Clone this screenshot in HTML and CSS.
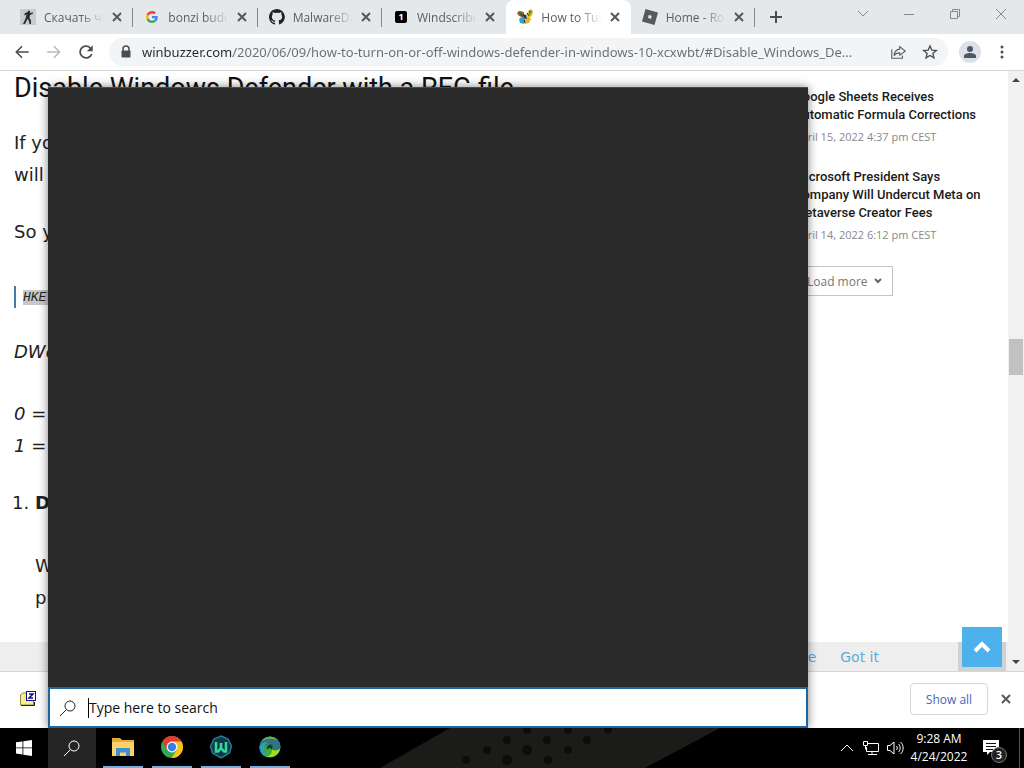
FILE: index.html
```html
<!DOCTYPE html>
<html lang="en">
<head>

    <meta charset="utf-8">
    <meta name="viewport" content="width=device-width, initial-scale=1.0">

    <title>Windows search</title>

    <link rel="stylesheet" href="styles.css">

</head>

<body>

<div class="desktop">

    <div class="tab-strip">

        <div class="tabs">

            <div class="tab">
                <svg class="favicon" viewBox="0 0 16 16"><rect width="16" height="16" fill="#c9cbcc"/><path d="M8.500 1.500l1.500.5v2l3-.5v1l-3 1.500-.5 3 1.500 2.500v3.500H9.500L9 12 7.500 10 5 15H3l2.500-5.500 1-4-2 1v-2l3-1.500z" fill="#2b2b2b"/></svg>
                <a class="tab-title" href="#">Скачать читы</a>
                <button class="tab-close" title="Close tab"><svg viewBox="0 0 10 10"><path d="M1 1l8 8M9 1l-8 8"/></svg></button>
            </div>

            <div class="tab">
                <svg class="favicon favicon-google" viewBox="0 0 48 48"><path fill="#ea4335" d="M24 9.500c3.500 0 6.700 1.200 9.200 3.600l6.900-6.900C35.900 2.400 30.500 0 24 0 14.600 0 6.500 5.400 2.600 13.200l8 6.200C12.400 13.700 17.700 9.500 24 9.500z"/><path fill="#4285f4" d="M47 24.500c0-1.600-.2-3.100-.4-4.500H24v9h12.900c-.6 3-2.300 5.500-4.800 7.200l7.700 6C44.400 38 47 31.800 47 24.500z"/><path fill="#fbbc05" d="M10.500 28.600a14 14 0 0 1 0-9.200l-8-6.200a24 24 0 0 0 0 21.600z"/><path fill="#34a853" d="M24 48c6.500 0 11.900-2.100 15.900-5.800l-7.700-6c-2.200 1.500-5 2.300-8.200 2.300-6.300 0-11.600-4.200-13.500-9.900l-8 6.200C6.500 42.600 14.600 48 24 48z"/></svg>
                <a class="tab-title" href="#">bonzi buddy</a>
                <button class="tab-close" title="Close tab"><svg viewBox="0 0 10 10"><path d="M1 1l8 8M9 1l-8 8"/></svg></button>
            </div>

            <div class="tab">
                <svg class="favicon" viewBox="0 0 16 16"><path fill="#202327" d="M8 0C3.600 0 0 3.600 0 8c0 3.500 2.300 6.500 5.500 7.600.4.100.5-.2.500-.4v-1.500c-2.200.5-2.700-.9-2.700-.9-.4-.9-.9-1.200-.9-1.200-.7-.5.100-.5.100-.5.800.1 1.200.8 1.200.8.700 1.200 1.900.9 2.300.7.100-.5.300-.9.500-1.100-1.800-.2-3.600-.9-3.600-4 0-.9.300-1.600.8-2.100-.1-.2-.4-1 .1-2.100 0 0 .7-.2 2.200.8a7.600 7.600 0 0 1 4 0c1.500-1 2.200-.8 2.200-.8.400 1.100.2 1.900.1 2.100.5.600.8 1.300.8 2.100 0 3.100-1.900 3.700-3.700 3.900.3.300.6.800.6 1.500v2.200c0 .2.100.5.600.4A8 8 0 0 0 8 0z"/></svg>
                <a class="tab-title" href="#">MalwareDatabase</a>
                <button class="tab-close" title="Close tab"><svg viewBox="0 0 10 10"><path d="M1 1l8 8M9 1l-8 8"/></svg></button>
            </div>

            <div class="tab">
                <span class="favicon favicon-one">1</span>
                <a class="tab-title" href="#">Windscribe VPN</a>
                <button class="tab-close" title="Close tab"><svg viewBox="0 0 10 10"><path d="M1 1l8 8M9 1l-8 8"/></svg></button>
            </div>

            <div class="tab tab-active">
                <svg class="favicon" viewBox="0 0 16 16"><path d="M0 4l3-2 4 1v4l-3 1-3-2z" fill="#c9502a"/><path d="M1 2l3 1 2 3-3 1z" fill="#2d7a3c"/><path d="M9 6l2-4 3-2 2 2-1 5-4 2z" fill="#e8c326"/><path d="M12 1l3 1-1 3-2 1z" fill="#4f9440"/><path d="M2 10l4-3 3 3-2 5-4-1z" fill="#3f9fca"/><path d="M8 10l4-3 2 3-2 4-4 1z" fill="#eeb41f"/><path d="M6 5l3 1 1 4-3-1z" fill="#22303a"/><path d="M10 4l2 3M7 11l1 3M4 5l2 3" stroke="#3b2a1a" fill="none"/></svg>
                <a class="tab-title" href="#">How to Turn On</a>
                <button class="tab-close" title="Close tab"><svg viewBox="0 0 10 10"><path d="M1 1l8 8M9 1l-8 8"/></svg></button>
            </div>

            <div class="tab">
                <svg class="favicon" viewBox="0 0 16 16"><path fill="#58595b" fill-rule="evenodd" d="M3.500 0L16 3.400 12.500 16 0 12.500zM6.700 6l-.7 3 3 .8.800-3z"/></svg>
                <a class="tab-title" href="#">Home - Roblox</a>
                <button class="tab-close" title="Close tab"><svg viewBox="0 0 10 10"><path d="M1 1l8 8M9 1l-8 8"/></svg></button>
            </div>

        </div>

        <button class="new-tab" title="New tab"><svg viewBox="0 0 12 12"><path d="M6 0v12M0 6h12"/></svg></button>

        <div class="window-controls">
            <button title="Search tabs"><svg viewBox="0 0 12 12"><path d="M1 3l5 5 5-5"/></svg></button>
            <button title="Minimize"><svg viewBox="0 0 12 12"><path d="M1 6.500h10"/></svg></button>
            <button title="Restore"><svg viewBox="0 0 12 12"><path d="M1.500 3.500h7v7h-7zM3.500 3.500v-2h7v7h-2"/></svg></button>
            <button title="Close"><svg viewBox="0 0 12 12"><path d="M1 1l10 10M11 1L1 11"/></svg></button>
        </div>

    </div>

    <div class="toolbar">

        <button class="icon-button" title="Back"><svg viewBox="0 0 24 24"><path fill="#4a4d51" d="M21 11H6.800l6-6-1.500-1.400L3 12l8.300 8.400 1.500-1.400-6-6H21z"/></svg></button>
        <button class="icon-button" title="Forward"><svg viewBox="0 0 24 24"><path fill="#b9bbbd" d="M3 11h14.200l-6-6 1.500-1.400L21 12l-8.300 8.400-1.500-1.400 6-6H3z"/></svg></button>
        <button class="icon-button" title="Reload"><svg viewBox="0 0 24 24"><path fill="#4a4d51" d="M18.400 5.600A9 9 0 1 0 20.700 14.500h-2.400A6.700 6.700 0 1 1 16.800 7.200L13 11h8V3z"/></svg></button>

        <div class="address-bar">
            <svg class="lock" viewBox="0 0 12 14"><path d="M3 6V4a3 3 0 0 1 6 0v2" fill="none" stroke="#4a4d51" stroke-width="1.500"/><rect x="1.500" y="5.500" width="9" height="7" rx="1" fill="#4a4d51"/></svg>
            <input class="address-input" type="text" aria-label="Address" value="winbuzzer.com/2020/06/09/how-to-turn-on-or-off-windows-defender-in-windows-10-xcxwbt/#Disable_Windows_De...">
            <button class="icon-button" title="Share"><svg viewBox="0 0 18 18" fill="none" stroke="#5b5e62" stroke-width="1.300"><path d="M2 6v10h12v-3M11 3l6 5-6 4.500V10c-3 0-5 .8-6.500 3C5 9 7 6 11 5.700z"/></svg></button>
            <button class="icon-button" title="Bookmark"><svg viewBox="0 0 24 24" fill="none" stroke="#4a4d51" stroke-width="2"><path d="M12 3l2.700 6.200 6.800.6-5.200 4.400 1.600 6.600-5.900-3.500-5.900 3.500 1.600-6.600-5.200-4.400 6.800-.6z"/></svg></button>
        </div>

        <button class="profile" title="Profile"><svg viewBox="0 0 14 14" fill="#4c5766"><circle cx="7" cy="4" r="3"/><path d="M1 13v-2c0-2 3-3 6-3s6 1 6 3v2z"/></svg></button>
        <button class="icon-button" title="Menu"><svg viewBox="0 0 18 18" fill="#4a4d51"><circle cx="9" cy="4" r="1.500"/><circle cx="9" cy="9" r="1.500"/><circle cx="9" cy="14" r="1.500"/></svg></button>

    </div>

    <div class="page">

        <div class="article">
            <h2 class="article-title">Disable Windows Defender with a REG file</h2>
            <p>If you<br>will</p>
            <p>So you</p>
            <blockquote class="registry-key"><code>HKEY</code></blockquote>
            <p class="registry-value"><em>DWord</em></p>
            <p class="registry-value"><em>0 =</em><br><em>1 =</em></p>
            <ol class="steps">
                <li>
                    <strong>Do</strong>
                    <p>We<br>pr</p>
                </li>
            </ol>
        </div>

        <div class="sidebar">
            <div class="news-item">
                <a class="news-title" href="#">Google Sheets Receives Automatic Formula Corrections</a>
                <span class="news-date">April 15, 2022 4:37 pm CEST</span>
            </div>
            <div class="news-item">
                <a class="news-title" href="#">Microsoft President Says Company Will Undercut Meta on Metaverse Creator Fees</a>
                <span class="news-date">April 14, 2022 6:12 pm CEST</span>
            </div>
            <button class="load-more">Load more <svg viewBox="0 0 8 6"><path d="M1 1l3 3 3-3"/></svg></button>
        </div>

        <div class="scrollbar">
            <svg viewBox="0 0 8 4"><path d="M0 4l4-4 4 4z"/></svg>
            <div class="scroll-before"></div>
            <div class="scroll-thumb"></div>
            <div class="scroll-after"></div>
            <svg viewBox="0 0 8 4"><path d="M0 0l4 4 4-4z"/></svg>
        </div>

        <div class="cookie-bar">
            <a href="#">Read More</a>
            <a href="#">Got it</a>
            <div class="scroll-top-base"></div>
        </div>

        <button class="scroll-top" title="Back to top"><svg viewBox="0 0 18 12"><path d="M2 10l7-7 7 7"/></svg></button>

    </div>

    <div class="download-bar">
        <svg class="download-icon" viewBox="0 0 16 16"><path d="M.5 4l2-2h4v2h7v10H.5z" fill="#f3f08c" stroke="#8f8c35"/><path d="M1 14.500h13.500V11" fill="none" stroke="#222"/><rect x="6.500" y=".5" width="9" height="9" fill="#fff" stroke="#101090"/><path d="M9 3h4L9 7h4" fill="none" stroke="#101090" stroke-width="1.500"/></svg>
        <button class="show-all">Show all</button>
        <button class="download-close" title="Close"><svg viewBox="0 0 10 10"><path d="M1 1l8 8M9 1l-8 8"/></svg></button>
    </div>

    <div class="taskbar">

        <button class="start" title="Start"><svg viewBox="0 0 16 16"><path fill="#fff" d="M0 2.300l6.500-.9v6.100H0zM7.300 1.300L16 0v7.500H7.300zM0 8.300h6.500v6.200L0 13.600zM7.300 8.300H16V16l-8.700-1.300z"/></svg></button>
        <button class="task-search" title="Search"><svg viewBox="0 0 18 18"><circle cx="11" cy="7" r="5"/><path d="M7.500 10.500L1 17"/></svg></button>

        <div class="task-apps">
            <button title="File Explorer"><svg viewBox="0 0 24 24"><path d="M1 3h8l2 2h12v16H1z" fill="#e9a83a"/><path d="M1 7h22v14H1z" fill="#fbd16b"/><path d="M5 21v-8h14v8h-4v-3.500H9V21z" fill="#3f8fcf"/></svg></button>
            <button title="Chrome"><svg viewBox="0 0 24 24"><circle cx="12" cy="12" r="11" fill="#34a853"/><path d="M2.500 6.500A11 11 0 0 1 21.500 6.500H12L7.200 14.700z" fill="#e33b2e"/><path d="M21.500 6.500A11 11 0 0 1 11.500 23L16.800 14.800 12 6.500z" fill="#fbc116"/><circle cx="12" cy="12" r="5.400" fill="#fff"/><circle cx="12" cy="12" r="4.200" fill="#3a7de8"/></svg></button>
            <button title="W app"><svg viewBox="0 0 24 24"><path d="M12 1l7 3 3.500 7-2 7-8.500 5-8.500-5-2-7L5 4z" fill="#103848" stroke="#2c7894" stroke-width="1.500"/><path d="M7 7v9.500h2l3-3.500 3 3.500h2V7M12 8v5" fill="none" stroke="#35d898" stroke-width="2.600"/></svg></button>
            <button title="Web browser"><svg viewBox="0 0 24 24"><circle cx="12" cy="12" r="10.500" fill="#3fb03c"/><path d="M1.500 12a10.500 10.500 0 0 1 21 0c0 3-5 4.500-8 2.500 2-3-1-6-4.500-5-3 .8-4.500 3.500-3.500 7.500L3 17z" fill="#2f7384"/><path d="M3 7A10.500 10.500 0 0 1 20 5.500C15 3 7 3 3 7z" fill="#6fb34a"/><path d="M14 14.500c2 2 6 1 8-1A10.500 10.500 0 0 1 7 21c5 1 7-2 7-6.500z" fill="#a4dc28"/><path d="M1.500 12C3 8 7 6 10 8c-3 1-5 5-3.500 9L9 22C4.500 21 1.500 17 1.500 12z" fill="#2a9fb8"/><path d="M9 15c-1-3 1-5.500 3-5.500 3 0 3.500 2.500 2 5-2-2-4-1.500-5 .5z" fill="#143c30"/></svg></button>
        </div>

        <svg class="wallpaper" viewBox="0 0 340 40"><path d="M0 40L70 0h270L265 40z" fill="#1b1b19"/><g fill="#0c0c0b"><circle cx="127" cy="12" r="4"/><circle cx="147" cy="2" r="4"/><circle cx="167" cy="12" r="4"/><circle cx="188" cy="2" r="4"/><circle cx="207" cy="12" r="4"/><circle cx="228" cy="1" r="4"/><circle cx="107" cy="22" r="4"/><circle cx="147" cy="22" r="5"/><circle cx="188" cy="22" r="4"/><circle cx="86" cy="32" r="4"/><circle cx="127" cy="32" r="5"/><circle cx="168" cy="32" r="4"/></g></svg>

        <div class="tray">
            <button title="Show hidden icons"><svg viewBox="0 0 18 18"><path d="M3 12l6-6 6 6"/></svg></button>
            <button title="Network"><svg viewBox="0 0 18 18"><path d="M6 4.500h10.500v8H4.500V8M10 12.500v3M6 15.500h9M1.500 2.500h4v4h-4zM3.500 6.500v4"/></svg></button>
            <button title="Volume"><svg viewBox="0 0 18 18"><path d="M1.500 6.500H4l4-3.500v12l-4-3.500H1.500zM10.500 7c1 1 1 3 0 4M12.500 5c2.200 2 2.200 6 0 8M14.500 3c3.500 3 3.500 9 0 12"/></svg></button>
        </div>

        <div class="clock">
            <span>9:28 AM</span>
            <span>4/24/2022</span>
        </div>

        <button class="notifications" title="Notifications">
            <svg viewBox="0 0 16 16"><path d="M0 0h16v12H7l-3 3v-3H0z" fill="#fff"/><path d="M3 3.500h10M3 6.500h10M3 9.500h7" stroke="#111"/></svg>
            <span class="notification-count">3</span>
        </button>

    </div>

    <div class="search-panel">
        <div class="search-results"></div>
        <div class="search-box">
            <svg viewBox="0 0 18 18"><circle cx="11" cy="7" r="5"/><path d="M7.500 10.500L1 17"/></svg>
            <input class="search-input" type="text" aria-label="Search" placeholder="Type here to search">
        </div>
    </div>

</div>

</body>
</html>
```
FILE: styles.css
```css
* {
    box-sizing: border-box;
}

body {
    margin: 0;
    font-family: "Open Sans", sans-serif;
    font-size: 12px;
    color: #222;
}

button {
    display: flex;
    align-items: center;
    justify-content: center;
    margin: 0;
    padding: 0;
    border: 0;
    background: none;
    font-family: inherit;
    flex-shrink: 0;
}

input {
    font-family: inherit;
    border: 0;
    outline: 0;
    padding: 0;
    min-width: 0;
}

a {
    text-decoration: none;
}

svg {
    display: block;
    flex-shrink: 0;
}

.desktop {
    position: relative;
    display: flex;
    flex-direction: column;
    height: 100vh;
    overflow: hidden;
    background: #fff;
}

/* tabs */

.tab-strip {
    display: flex;
    height: 34px;
    padding-left: 9px;
    background: #e5e8eb;
    flex-shrink: 0;
}

.tabs {
    display: flex;
    flex: 0 1 746px;
    min-width: 0;
}

.tab {
    position: relative;
    display: flex;
    flex: 1;
    align-items: center;
    min-width: 0;
    padding: 0 11px;
}

.tab::after {
    content: "";
    position: absolute;
    right: 0;
    top: 8px;
    width: 1px;
    height: 19px;
    background: #85888b;
}

.tab-active {
    background: #fff;
    border-radius: 8px 8px 0 0;
}

.tab-active::after,
.tab:has(+ .tab-active)::after {
    display: none;
}

.favicon {
    width: 16px;
    height: 16px;
    flex-shrink: 0;
}

.favicon-google {
    width: 12px;
    height: 12px;
    margin: 0 2px;
}

.favicon-one {
    width: 12px;
    height: 12px;
    margin: 0 2px;
    border-radius: 2px;
    background: #000;
    color: #fff;
    font-size: 9px;
    font-weight: bold;
    line-height: 12px;
    text-align: center;
}

.tab-title {
    flex: 1;
    margin: 0 8px;
    overflow: hidden;
    white-space: nowrap;
    color: #5a5e63;
    mask-image: linear-gradient(90deg, #000 60%, transparent);
}

.tab-close svg,
.download-close svg {
    width: 10px;
    height: 10px;
    stroke: #55585c;
    stroke-width: 2;
}

.new-tab {
    width: 42px;
}

.new-tab svg {
    width: 12px;
    height: 12px;
    stroke: #4a4d51;
    stroke-width: 2;
}

.window-controls {
    display: flex;
    margin-left: auto;
}

.window-controls button {
    width: 46px;
    height: 28px;
}

.window-controls svg {
    width: 12px;
    height: 12px;
    fill: none;
    stroke: #85888b;
}

/* toolbar */

.toolbar {
    display: flex;
    align-items: center;
    gap: 4px;
    height: 37px;
    padding: 0 8px;
    border-bottom: 1px solid #d4d6d8;
    flex-shrink: 0;
}

.icon-button {
    width: 28px;
    height: 28px;
}

.icon-button svg {
    width: 18px;
    height: 18px;
}

.address-bar {
    display: flex;
    flex: 1;
    align-items: center;
    gap: 4px;
    min-width: 0;
    height: 28px;
    margin: 0 4px 0 5px;
    padding: 0 4px 0 11px;
    border-radius: 14px;
    background: #f3f4f6;
}

.address-bar .icon-button svg {
    width: 16px;
    height: 16px;
}

.address-bar .lock {
    width: 12px;
    height: 14px;
}

.address-input {
    flex: 1;
    height: 28px;
    margin-left: 6px;
    font-family: "Noto Sans", sans-serif;
    font-size: 13px;
    color: transparent;
    background: linear-gradient(90deg, #26282b 91px, #696c71 91px);
    background-clip: text;
}

.profile {
    width: 22px;
    height: 22px;
    margin: 0 3px;
    border-radius: 50%;
    background: #dde0e6;
}

.profile svg {
    width: 14px;
    height: 14px;
}

/* web page */

.page {
    position: relative;
    display: flex;
    flex: 1;
    min-height: 0;
    overflow: hidden;
}

.article {
    flex: 1;
    min-width: 0;
    padding-left: 14px;
    overflow: hidden;
    font-family: Verdana, "DejaVu Sans", sans-serif;
    font-size: 18px;
    line-height: 32px;
}

.article p {
    margin: 0 0 25px;
}

.article-title {
    margin: 1px 0 23px;
    font-family: Roboto, sans-serif;
    font-size: 27px;
    font-weight: 400;
    line-height: 32px;
    color: #111;
}

.article .registry-key {
    margin: 38px 0 28px;
    padding-left: 7px;
    border-left: 2px solid #4a79a5;
    font-size: 13px;
    line-height: 21px;
}

.registry-key code {
    font-family: "Liberation Mono", monospace;
    font-style: italic;
    background: #c8c8c8;
}

.article .registry-value {
    margin-bottom: 30px;
}

.article .registry-value + .steps {
    margin-top: -5px;
}

.steps {
    margin: 0;
    padding-left: 21px;
}

.steps p {
    margin-top: 31px;
}

.sidebar {
    width: 214px;
    padding: 17px 20px 0 0;
    flex-shrink: 0;
}

.news-item {
    margin-bottom: 22px;
}

.news-title {
    display: block;
    font-family: Roboto, sans-serif;
    font-size: 13px;
    font-weight: 500;
    line-height: 18px;
    color: #1a1a1a;
}

.news-date {
    display: block;
    margin-top: 4px;
    font-size: 11px;
    line-height: 18px;
    color: #888;
}

.load-more {
    gap: 6px;
    height: 30px;
    margin-top: 18px;
    padding: 0 10px 0 12px;
    border: 1px solid #c4c4c4;
    font-size: 12px;
    color: #777;
}

.load-more svg {
    width: 8px;
    height: 6px;
    fill: none;
    stroke: #666;
    stroke-width: 2;
}

.scrollbar {
    display: flex;
    flex-direction: column;
    align-items: center;
    width: 16px;
    padding: 7px 0;
    background: #f1f1f1;
    flex-shrink: 0;
}

.scrollbar svg {
    width: 8px;
    height: 4px;
    fill: #444;
}

.scroll-before {
    flex: 257;
}

.scroll-after {
    flex: 284;
}

.scroll-thumb {
    width: 14px;
    height: 36px;
    background: #c1c1c1;
}

.cookie-bar {
    position: absolute;
    left: 0;
    right: 16px;
    bottom: 0;
    display: flex;
    align-items: center;
    justify-content: flex-end;
    gap: 24px;
    height: 29px;
    padding-right: 2px;
    background: #eee;
    font-family: Verdana, "DejaVu Sans", sans-serif;
    font-size: 14px;
}

.cookie-bar a {
    color: #5aaed3;
}

.scroll-top-base {
    width: 48px;
    height: 29px;
    margin-left: 55px;
    background: #d0d1d3;
}

.scroll-top {
    position: absolute;
    right: 22px;
    bottom: 4px;
    width: 40px;
    height: 40px;
    background: #4db2ec;
}

.scroll-top svg {
    width: 18px;
    height: 12px;
    fill: none;
    stroke: #fff;
    stroke-width: 4;
}

/* downloads */

.download-bar {
    display: flex;
    align-items: center;
    height: 57px;
    padding: 0 8px 2px 20px;
    border-top: 1px solid #d4d6d8;
    flex-shrink: 0;
}

.download-icon {
    width: 16px;
    height: 16px;
}

.show-all {
    width: 78px;
    height: 32px;
    margin-left: auto;
    border: 1px solid #d4d6d9;
    border-radius: 4px;
    font-size: 12px;
    font-weight: 500;
    color: #4668b8;
}

.download-close {
    width: 20px;
    height: 20px;
    margin-left: 8px;
}

/* taskbar */

.taskbar {
    display: flex;
    height: 40px;
    background: #000;
    color: #fff;
    flex-shrink: 0;
}

.start,
.task-search {
    width: 48px;
}

.start svg {
    width: 16px;
    height: 16px;
}

.task-search {
    background: #252525;
}

.task-search svg,
.search-box svg {
    width: 18px;
    height: 18px;
    fill: none;
    stroke: #fff;
}

.task-apps {
    display: flex;
    gap: 9px;
    padding-left: 7px;
}

.task-apps button {
    width: 40px;
    border-bottom: 2px solid #76aede;
}

.task-apps svg {
    width: 24px;
    height: 24px;
}

.wallpaper {
    width: 340px;
    height: 40px;
    margin-left: 90px;
    flex-shrink: 1;
}

.tray {
    display: flex;
    gap: 6px;
    margin-left: auto;
}

.tray svg {
    width: 18px;
    height: 18px;
    fill: none;
    stroke: #fff;
}

.clock {
    display: flex;
    flex-direction: column;
    justify-content: center;
    width: 70px;
    text-align: center;
    line-height: 18px;
    font-size: 12px;
}

.notifications {
    position: relative;
    width: 46px;
    margin-right: 4px;
    padding-right: 12px;
    border-right: 1px solid #555;
}

.notifications svg {
    width: 16px;
    height: 16px;
}

.notification-count {
    position: absolute;
    left: 17px;
    top: 19px;
    width: 16px;
    height: 16px;
    border: 1px solid #777;
    border-radius: 50%;
    background: #222;
    color: #fff;
    font-size: 11px;
    font-weight: 600;
    line-height: 14px;
    text-align: center;
}

/* search flyout */

.search-panel {
    position: absolute;
    left: 48px;
    top: 87px;
    bottom: 40px;
    display: flex;
    flex-direction: column;
    width: 760px;
    max-width: calc(100% - 48px);
    box-shadow: 0 0 9px rgba(0, 0, 0, 0.5);
    clip-path: inset(-12px -12px 0 -12px);
}

.search-results {
    flex: 1;
    border-top: 1px solid #4a4a4a;
    background: #2a2a2a;
}

.search-box {
    display: flex;
    align-items: center;
    gap: 11px;
    height: 41px;
    padding-left: 9px;
    border: 2px solid #1c66a4;
    background: #fff;
}

.search-box svg {
    stroke: #222;
}

.search-input {
    flex: 1;
    height: 20px;
    border-left: 1px solid #000;
    font-size: 14px;
    background: #fff;
}

.search-input::placeholder {
    color: #111;
    opacity: 1;
}
```
